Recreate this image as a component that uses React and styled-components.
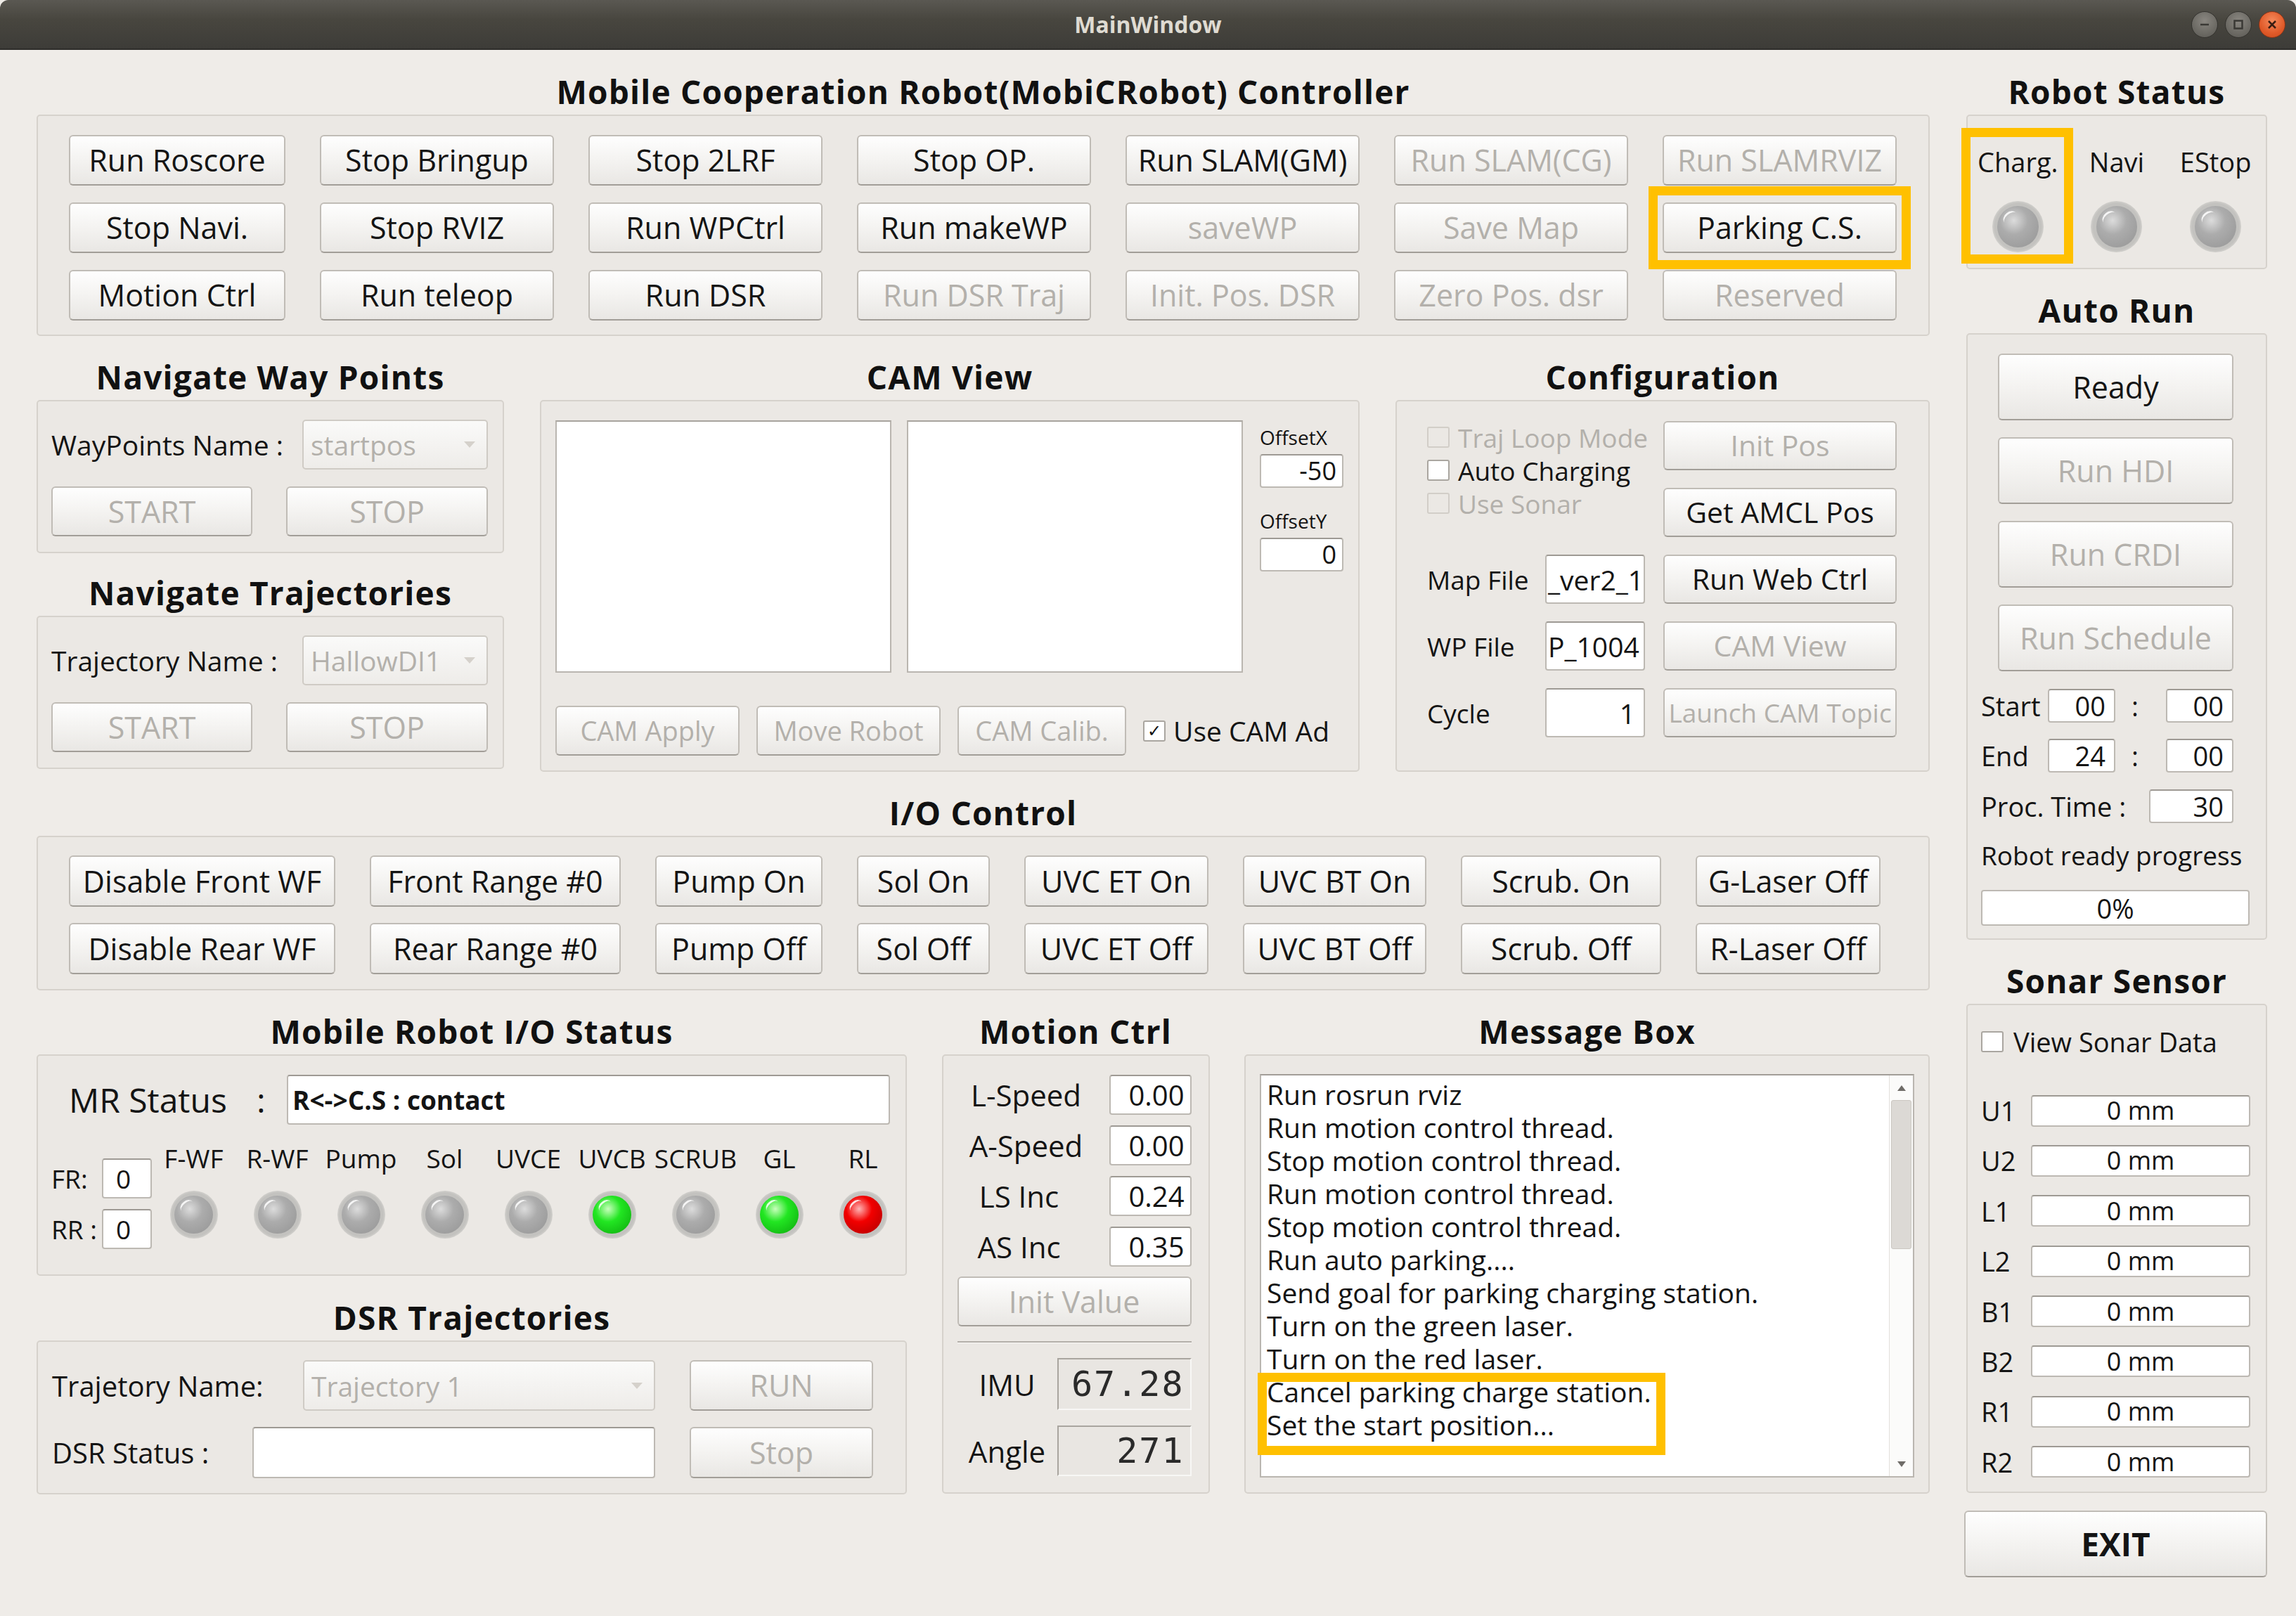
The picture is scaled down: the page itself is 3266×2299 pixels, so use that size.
import React from "react";
import styled, { createGlobalStyle } from "styled-components";

const FONT = `"Open Sans", "Noto Sans", "DejaVu Sans", sans-serif`;
const DIS = "#b3b0ab";
const INK = "#141414";

const GlobalStyle = createGlobalStyle`
  html, body { margin: 0; padding: 0; background: #efece8; }
  body { font-family: ${FONT}; }
  *, *::before, *::after { box-sizing: border-box; }
`;

const Window = styled.div`
  width: 3266px;
  height: 2299px;
  display: flex;
  flex-direction: column;
  background: #efece8;
  color: ${INK};
  overflow: hidden;
  font-family: ${FONT};
`;

const TitleBar = styled.header`
  flex: none;
  height: 71px;
  display: grid;
  grid-template-columns: 1fr auto 1fr;
  align-items: center;
  padding: 0 15px;
  background: linear-gradient(#5a5852, #48463f 40%, #3d3c38);
  border-radius: 12px 12px 0 0;
  border-bottom: 2px solid #2e2d2a;
`;
const WindowTitle = styled.div`
  grid-column: 2;
  font-size: 32px;
  font-weight: 700;
  color: #dfdbd2;
`;
const WinControls = styled.div`
  grid-column: 3;
  justify-self: end;
  display: flex;
  gap: 10px;
`;
const WinButton = styled.div`
  width: 38px;
  height: 38px;
  border-radius: 50%;
  display: flex;
  align-items: center;
  justify-content: center;
  border: 1px solid ${(p) => (p.$close ? "#8a3417" : "#34332f")};
  background: ${(p) =>
    p.$close
      ? "radial-gradient(circle at 50% 35%, #f58a5c, #e05a29 60%, #c94a1c)"
      : "radial-gradient(circle at 50% 35%, #8a8781, #6c6a64 60%, #5a5853)"};
`;

const Body = styled.main`
  flex: 1;
  display: flex;
  gap: 52px;
  padding: 29px 41px 0 52px;
`;
const Column = styled.div`
  width: ${(p) => p.$w}px;
  display: flex;
  flex-direction: column;
  gap: ${(p) => p.$gap}px;
`;
const Section = styled.section`
  display: flex;
  flex-direction: column;
`;
const SectionTitle = styled.h2`
  margin: 0 0 3px;
  height: 60px;
  line-height: 60px;
  text-align: center;
  font-size: 46px;
  letter-spacing: 1.2px;
  font-weight: 700;
  color: #111;
  white-space: nowrap;
`;
const Box = styled.div`
  height: ${(p) => p.$h}px;
  padding: ${(p) => p.$pad};
  background: #ebe8e4;
  border: 2px solid #d6d2cc;
  border-radius: 5px;
`;

const PushButton = styled.button.attrs({ type: "button" })`
  display: flex;
  align-items: center;
  justify-content: center;
  flex: none;
  width: ${(p) => (p.$w ? `${p.$w}px` : "100%")};
  height: ${(p) => p.$h || 72}px;
  margin: 0;
  padding: 0;
  font-family: ${FONT};
  font-size: ${(p) => p.$fs || 43}px;
  font-weight: ${(p) => (p.$bold ? 700 : 400)};
  line-height: 1.2;
  color: ${(p) => (p.$off ? DIS : INK)};
  white-space: nowrap;
  background: linear-gradient(#fefefe, #f5f4f2 45%, #e9e7e4);
  border: 2px solid #c0bcb6;
  border-bottom-color: #a29e98;
  border-radius: 6px;
  box-shadow: inset 0 1px 0 #fff;
`;

const LineEdit = styled.div`
  display: flex;
  align-items: center;
  justify-content: ${(p) =>
    p.$align === "right" ? "flex-end" : p.$align === "center" ? "center" : "flex-start"};
  flex: none;
  width: ${(p) => (p.$w ? `${p.$w}px` : "100%")};
  height: ${(p) => p.$h}px;
  padding: 0 ${(p) => p.$px ?? 10}px;
  background: #fff;
  border: 2px solid #bdb9b3;
  border-top-color: #9e9a94;
  border-radius: 4px;
  font-size: ${(p) => p.$fs || 38}px;
  font-weight: ${(p) => (p.$bold ? 700 : 400)};
  line-height: 1;
  white-space: nowrap;
`;

const Combo = styled.div`
  display: flex;
  align-items: center;
  flex: none;
  width: ${(p) => p.$w}px;
  height: ${(p) => p.$h}px;
  padding: 0 16px 0 10px;
  background: linear-gradient(#fafaf9, #eeece9);
  border: 2px solid #cfcbc5;
  border-radius: 5px;
  color: ${DIS};
  font-size: 39px;
  white-space: nowrap;
`;
const ComboArrow = styled.span`
  margin-left: auto;
  width: 0;
  height: 0;
  border-left: 8px solid transparent;
  border-right: 8px solid transparent;
  border-top: 9px solid #d5d1cb;
`;

const CheckBox = styled.span`
  flex: none;
  width: 32px;
  height: 30px;
  display: inline-flex;
  align-items: center;
  justify-content: center;
  background: ${(p) => (p.$off ? "transparent" : "#fff")};
  border: 2px solid ${(p) => (p.$off ? "#d2cec8" : "#aaa6a0")};
  border-radius: 3px;
  font-family: "DejaVu Sans", sans-serif;
  font-size: 24px;
  line-height: 1;
  color: #111;
`;
const CheckItem = styled.div`
  display: flex;
  align-items: center;
  gap: ${(p) => p.$gap || 12}px;
  height: ${(p) => p.$h || 40}px;
  font-size: ${(p) => p.$fs || 37}px;
  color: ${(p) => (p.$off ? DIS : INK)};
  white-space: nowrap;
`;

const Label = styled.span`
  font-size: ${(p) => p.$fs || 39}px;
  white-space: nowrap;
  color: ${INK};
`;

const Mark = styled.div`
  position: relative;
  display: flex;
  ${(p) => (p.$w ? `width: ${p.$w}px;` : "")}
  ${(p) => (p.$col ? "flex-direction: column;" : "")}
  &::after {
    content: "";
    position: absolute;
    top: ${(p) => p.$t}px;
    right: ${(p) => p.$r}px;
    bottom: ${(p) => p.$b}px;
    left: ${(p) => p.$l}px;
    border: 13px solid #ffc000;
    pointer-events: none;
    z-index: 2;
  }
`;

const LED_COLORS = {
  gray: ["#dcdcdc", "#acacac", "#949494"],
  green: ["#c8ffbc", "#22e622", "#0ca60c"],
  red: ["#ffb3b3", "#f20000", "#ac0000"],
};
const LedHalo = styled.div`
  flex: none;
  width: ${(p) => p.$size}px;
  height: ${(p) => p.$size}px;
  border-radius: 50%;
  display: flex;
  align-items: center;
  justify-content: center;
  background: radial-gradient(circle, #c3c2bf 0 64%, #dcdad6 76%, rgba(226, 224, 220, 0) 100%);
`;
const LedBulb = styled.div`
  position: relative;
  width: 80%;
  height: 80%;
  border-radius: 50%;
  background: radial-gradient(
    circle at 40% 35%,
    ${(p) => LED_COLORS[p.$c][0]} 0,
    ${(p) => LED_COLORS[p.$c][1]} 38%,
    ${(p) => LED_COLORS[p.$c][2]} 100%
  );
  &::after {
    content: "";
    position: absolute;
    left: 14%;
    top: 13%;
    width: 38%;
    height: 32%;
    border-radius: 50%;
    border-top: 3px solid rgba(255, 255, 255, 0.85);
    transform: rotate(-40deg);
  }
`;
const Led = ({ c = "gray", size = 68 }) => (
  <LedHalo $size={size}>
    <LedBulb $c={c} />
  </LedHalo>
);

/* ---------- top controller ---------- */
const TopGrid = styled.div`
  display: grid;
  grid-template-columns: 308px repeat(6, 333px);
  grid-auto-rows: 72px;
  column-gap: 49px;
  row-gap: 24px;
`;

/* ---------- middle row ---------- */
const MidRow = styled.div`
  display: grid;
  grid-template-columns: 665px 1166px 760px;
  column-gap: 51px;
`;
const NavStack = styled.div`
  display: flex;
  flex-direction: column;
  gap: ${(p) => p.$gap || 26}px;
`;
const NavNameRow = styled.div`
  display: flex;
  align-items: center;
  justify-content: space-between;
  height: 71px;
`;
const NavBtnRow = styled.div`
  display: grid;
  grid-template-columns: 286px 287px;
  column-gap: 48px;
  margin-top: 24px;
`;

const CamTop = styled.div`
  display: flex;
  gap: 22px;
`;
const Screen = styled.div`
  width: 478px;
  height: 359px;
  background: #fff;
  border: 2px solid #bab6b0;
  border-top-color: #a8a49e;
`;
const OffsetCol = styled.div`
  display: flex;
  flex-direction: column;
  margin-left: 2px;
  width: 119px;
`;
const OffsetLabel = styled.div`
  height: 48px;
  line-height: 48px;
  margin-top: ${(p) => p.$mt || 0}px;
  font-size: 28px;
  color: ${INK};
`;
const CamBottom = styled.div`
  display: flex;
  align-items: center;
  gap: 24px;
  margin-top: 47px;
`;

const ConfigGrid = styled.div`
  display: grid;
  grid-template-columns: 168px 142px 1fr;
  grid-template-rows: repeat(5, 70px);
  row-gap: 25px;
  align-items: center;
`;
const ConfigChecks = styled.div`
  grid-row: 1 / 3;
  grid-column: 1 / 3;
  align-self: start;
  margin-top: 3px;
  display: flex;
  flex-direction: column;
  gap: 7px;
`;
const ConfigButton = styled.div`
  grid-column: 3;
  grid-row: ${(p) => p.$row || "auto"};
  justify-self: end;
  height: 70px;
  display: flex;
`;

/* ---------- io control ---------- */
const IoGrid = styled.div`
  display: grid;
  grid-template-columns: 379px 357px 238px 189px 262px 261px 285px 263px;
  grid-auto-rows: 73px;
  column-gap: 49px;
  row-gap: 23px;
`;

/* ---------- bottom row ---------- */
const BottomRow = styled.div`
  display: grid;
  grid-template-columns: 1238px 381px 975px;
  column-gap: 49.5px;
`;
const MrRow = styled.div`
  display: flex;
  align-items: center;
  height: 71px;
`;
const MrLabel = styled.span`
  width: 267px;
  margin-left: 25px;
  font-size: 48px;
  white-space: nowrap;
`;
const MrColon = styled.span`
  width: 43px;
  font-size: 48px;
`;
const StatusRow = styled.div`
  display: flex;
  align-items: flex-start;
`;
const RangeCol = styled.div`
  margin-top: 48px;
  display: grid;
  grid-template-columns: 72px 71px;
  grid-template-rows: 57px 57px;
  row-gap: 15px;
  align-items: center;
`;
const LedGrid = styled.div`
  margin-top: 28px;
  display: grid;
  grid-template-columns: repeat(9, 119px);
`;
const LedCell = styled.div`
  display: flex;
  flex-direction: column;
  align-items: center;
  gap: 26px;
`;
const LedLabel = styled.div`
  height: 40px;
  line-height: 40px;
  font-size: ${(p) => p.$fs || 37}px;
  white-space: nowrap;
`;

const DsrRow = styled.div`
  display: grid;
  grid-template-columns: 1fr ${(p) => p.$field}px 261px;
  column-gap: 49px;
  align-items: center;
  height: 72px;
  margin-top: ${(p) => p.$mt || 0}px;
`;

const MotionGrid = styled.div`
  display: grid;
  grid-template-columns: 1fr 117px;
  grid-auto-rows: 57px;
  row-gap: 15px;
  align-items: center;
`;
const CenterLabel = styled.span`
  justify-self: center;
  padding-right: ${(p) => p.$pr || 0}px;
  font-size: 42px;
  white-space: nowrap;
`;
const InitWrap = styled.div`
  margin-top: 14px;
  display: flex;
`;
const Separator = styled.div`
  margin-top: 21px;
  height: 3px;
  border-top: 2px solid #b3afa9;
  border-bottom: 1px solid #fbfaf9;
`;
const LcdGrid = styled.div`
  margin-top: 21px;
  display: grid;
  grid-template-columns: 1fr 191px;
  grid-template-rows: 74px 72px;
  row-gap: 22px;
  align-items: center;
`;
const Lcd = styled.div`
  height: 100%;
  display: flex;
  align-items: center;
  justify-content: flex-end;
  padding-right: 8px;
  background: #e9e6e2;
  border: 2px solid #a9a59f;
  border-right-color: #f8f7f5;
  border-bottom-color: #f8f7f5;
  font-family: "DejaVu Sans Mono", "Liberation Mono", monospace;
  font-size: 50px;
  letter-spacing: 2px;
  color: #2a2a2a;
  line-height: 1;
`;

const TextArea = styled.div`
  height: 100%;
  display: flex;
  background: #fff;
  border: 2px solid #bab6b0;
  border-top-color: #a29e98;
`;
const MsgLines = styled.div`
  flex: 1;
  padding: 3px 0 0 8px;
`;
const MsgLine = styled.div`
  height: 47px;
  line-height: 47px;
  font-size: 39px;
  white-space: nowrap;
`;
const ScrollBar = styled.div`
  width: 34px;
  display: flex;
  flex-direction: column;
  border-left: 1px solid #e3e0dc;
  background: #fbfbfa;
`;
const ScrollArrow = styled.div`
  height: 35px;
  display: flex;
  align-items: center;
  justify-content: center;
  margin-top: ${(p) => (p.$down ? "auto" : "0")};
`;
const ScrollThumb = styled.div`
  height: 212px;
  margin: 0 2px;
  background: #dcd9d5;
  border: 1px solid #cbc7c1;
  border-radius: 3px;
`;

/* ---------- right column ---------- */
const StatusGrid = styled.div`
  display: grid;
  grid-template-columns: repeat(3, 1fr);
`;
const StatusCell = styled.div`
  display: flex;
  flex-direction: column;
  align-items: center;
  gap: 36px;
`;
const AutoStack = styled.div`
  margin-left: 24px;
  width: 335px;
  display: flex;
  flex-direction: column;
  gap: 24px;
`;
const TimeRow = styled.div`
  display: grid;
  grid-template-columns: ${(p) => p.$cols};
  align-items: center;
  height: 48px;
  margin-top: ${(p) => p.$mt}px;
`;
const Colon = styled.span`
  font-size: 38px;
  justify-self: center;
  padding-right: 16px;
`;
const ProgressText = styled.div`
  margin-top: 28px;
  height: 40px;
  line-height: 40px;
  font-size: 37px;
  white-space: nowrap;
`;
const Progress = styled.div`
  margin-top: 29px;
  width: 382px;
  height: 51px;
  display: flex;
  align-items: center;
  justify-content: center;
  background: #fff;
  border: 2px solid #bdb9b3;
  border-radius: 4px;
  font-size: 38px;
  line-height: 1;
`;
const SonarList = styled.div`
  margin-top: 52px;
  display: flex;
  flex-direction: column;
  gap: 26.4px;
`;
const SonarRow = styled.div`
  display: grid;
  grid-template-columns: 71px 312px;
  align-items: center;
  height: 45px;
`;
const ExitButton = styled(PushButton)`
  margin-top: -3px;
  margin-left: -3px;
  width: 431px;
`;

/* ---------- data ---------- */
const TOP = [
  ["Run Roscore"], ["Stop Bringup"], ["Stop 2LRF"], ["Stop OP."], ["Run SLAM(GM)"], ["Run SLAM(CG)", 1], ["Run SLAMRVIZ", 1],
  ["Stop Navi."], ["Stop RVIZ"], ["Run WPCtrl"], ["Run makeWP"], ["saveWP", 1], ["Save Map", 1], ["Parking C.S.", 0, 1],
  ["Motion Ctrl"], ["Run teleop"], ["Run DSR"], ["Run DSR Traj", 1], ["Init. Pos. DSR", 1], ["Zero Pos. dsr", 1], ["Reserved", 1],
];
const IO = [
  "Disable Front WF", "Front Range #0", "Pump On", "Sol On", "UVC ET On", "UVC BT On", "Scrub. On", "G-Laser Off",
  "Disable Rear WF", "Rear Range #0", "Pump Off", "Sol Off", "UVC ET Off", "UVC BT Off", "Scrub. Off", "R-Laser Off",
];
const LEDS = [
  ["F-WF", "gray"], ["R-WF", "gray"], ["Pump", "gray"], ["Sol", "gray"], ["UVCE", "gray"],
  ["UVCB", "green"], ["SCRUB", "gray"], ["GL", "green"], ["RL", "red"],
];
const MESSAGES = [
  "Run rosrun rviz",
  "Run motion control thread.",
  "Stop motion control thread.",
  "Run motion control thread.",
  "Stop motion control thread.",
  "Run auto parking....",
  "Send goal for parking charging station.",
  "Turn on the green laser.",
  "Turn on the red laser.",
];
const SONAR = ["U1", "U2", "L1", "L2", "B1", "B2", "R1", "R2"];

const MinIcon = () => (
  <svg width="20" height="20" viewBox="0 0 20 20">
    <line x1="4" y1="10" x2="16" y2="10" stroke="#3a3935" strokeWidth="2.5" />
  </svg>
);
const MaxIcon = () => (
  <svg width="20" height="20" viewBox="0 0 20 20">
    <rect x="4.5" y="4.5" width="11" height="11" fill="none" stroke="#3a3935" strokeWidth="2.5" />
  </svg>
);
const CloseIcon = () => (
  <svg width="20" height="20" viewBox="0 0 20 20">
    <path d="M5 5 L15 15 M15 5 L5 15" stroke="#3b1d12" strokeWidth="2.5" />
  </svg>
);
const Tri = ({ down }) => (
  <svg width="14" height="10" viewBox="0 0 14 10">
    <path d={down ? "M1 1 L13 1 L7 9 Z" : "M1 9 L13 9 L7 1 Z"} fill="#6f6c68" />
  </svg>
);

export default function App() {
  return (
    <>
      <GlobalStyle />
      <Window>
        <TitleBar>
          <WindowTitle>MainWindow</WindowTitle>
          <WinControls>
            <WinButton><MinIcon /></WinButton>
            <WinButton><MaxIcon /></WinButton>
            <WinButton $close><CloseIcon /></WinButton>
          </WinControls>
        </TitleBar>

        <Body>
          <Column $w={2693} $gap={28}>
            <Section>
              <SectionTitle>Mobile Cooperation Robot(MobiCRobot) Controller</SectionTitle>
              <Box $h={315} $pad="27px 45px 0 44px">
                <TopGrid>
                  {TOP.map(([t, off, mark], i) =>
                    mark ? (
                      <Mark key={i} $t={-23} $r={-20} $b={-23} $l={-20}>
                        <PushButton>{t}</PushButton>
                      </Mark>
                    ) : (
                      <PushButton key={i} $off={!!off}>{t}</PushButton>
                    )
                  )}
                </TopGrid>
              </Box>
            </Section>

            <MidRow>
              <NavStack>
                <Section>
                  <SectionTitle>Navigate Way Points</SectionTitle>
                  <Box $h={218} $pad="26px 21px 0 19px">
                    <NavNameRow>
                      <Label>WayPoints Name :</Label>
                      <Combo $w={264} $h={71}>startpos<ComboArrow /></Combo>
                    </NavNameRow>
                    <NavBtnRow>
                      <PushButton $h={71} $off>START</PushButton>
                      <PushButton $h={71} $off>STOP</PushButton>
                    </NavBtnRow>
                  </Box>
                </Section>
                <Section>
                  <SectionTitle>Navigate Trajectories</SectionTitle>
                  <Box $h={218} $pad="26px 21px 0 19px">
                    <NavNameRow>
                      <Label>Trajectory Name :</Label>
                      <Combo $w={264} $h={71}>HallowDI1<ComboArrow /></Combo>
                    </NavNameRow>
                    <NavBtnRow>
                      <PushButton $h={71} $off>START</PushButton>
                      <PushButton $h={71} $off>STOP</PushButton>
                    </NavBtnRow>
                  </Box>
                </Section>
              </NavStack>

              <Section>
                <SectionTitle>CAM View</SectionTitle>
                <Box $h={529} $pad="27px 20px 0 20px">
                  <CamTop>
                    <Screen />
                    <Screen />
                    <OffsetCol>
                      <OffsetLabel>OffsetX</OffsetLabel>
                      <LineEdit $h={48} $align="right" $fs={36} $px={8}>-50</LineEdit>
                      <OffsetLabel $mt={23}>OffsetY</OffsetLabel>
                      <LineEdit $h={48} $align="right" $fs={36} $px={8}>0</LineEdit>
                    </OffsetCol>
                  </CamTop>
                  <CamBottom>
                    <PushButton $w={262} $h={71} $off $fs={38}>CAM Apply</PushButton>
                    <PushButton $w={262} $h={71} $off $fs={38}>Move Robot</PushButton>
                    <PushButton $w={240} $h={71} $off $fs={38}>CAM Calib.</PushButton>
                    <CheckItem $fs={39} $gap={11}>
                      <CheckBox>✓</CheckBox>
                      Use CAM Ad
                    </CheckItem>
                  </CamBottom>
                </Box>
              </Section>

              <Section>
                <SectionTitle>Configuration</SectionTitle>
                <Box $h={529} $pad="28px 45px 0 43px">
                  <ConfigGrid>
                    <ConfigChecks>
                      <CheckItem $off><CheckBox $off />Traj Loop Mode</CheckItem>
                      <CheckItem><CheckBox />Auto Charging</CheckItem>
                      <CheckItem $off><CheckBox $off />Use Sonar</CheckItem>
                    </ConfigChecks>
                    <ConfigButton $row={1}>
                      <PushButton $w={332} $h={70} $off $fs={41}>Init Pos</PushButton>
                    </ConfigButton>
                    <ConfigButton $row={2}>
                      <PushButton $w={332} $h={70} $fs={41}>Get AMCL Pos</PushButton>
                    </ConfigButton>

                    <Label $fs={37}>Map File</Label>
                    <LineEdit $h={70} $px={2} $fs={39}>_ver2_1</LineEdit>
                    <ConfigButton>
                      <PushButton $w={332} $h={70} $fs={41}>Run Web Ctrl</PushButton>
                    </ConfigButton>

                    <Label $fs={37}>WP File</Label>
                    <LineEdit $h={70} $px={2} $fs={39}>P_1004</LineEdit>
                    <ConfigButton>
                      <PushButton $w={332} $h={70} $off $fs={41}>CAM View</PushButton>
                    </ConfigButton>

                    <Label $fs={37}>Cycle</Label>
                    <LineEdit $h={70} $align="right" $px={12} $fs={39}>1</LineEdit>
                    <ConfigButton>
                      <PushButton $w={332} $h={70} $off $fs={37}>Launch CAM Topic</PushButton>
                    </ConfigButton>
                  </ConfigGrid>
                </Box>
              </Section>
            </MidRow>

            <Section>
              <SectionTitle>I/O Control</SectionTitle>
              <Box $h={220} $pad="26px 44px 0 44px">
                <IoGrid>
                  {IO.map((t, i) => (
                    <PushButton key={i} $h={73}>{t}</PushButton>
                  ))}
                </IoGrid>
              </Box>
            </Section>

            <BottomRow>
              <NavStack $gap={29}>
                <Section>
                  <SectionTitle>Mobile Robot I/O Status</SectionTitle>
                  <Box $h={315} $pad="27px 22px 0 19px">
                    <MrRow>
                      <MrLabel>MR Status</MrLabel>
                      <MrColon>:</MrColon>
                      <LineEdit $w={858} $h={71} $bold $fs={37} $px={6}>R&lt;-&gt;C.S : contact</LineEdit>
                    </MrRow>
                    <StatusRow>
                      <RangeCol>
                        <Label $fs={37}>FR:</Label>
                        <LineEdit $h={57} $fs={37} $px={18}>0</LineEdit>
                        <Label $fs={37}>RR :</Label>
                        <LineEdit $h={57} $fs={37} $px={18}>0</LineEdit>
                      </RangeCol>
                      <LedGrid>
                        {LEDS.map(([name, c]) => (
                          <LedCell key={name}>
                            <LedLabel>{name}</LedLabel>
                            <Led c={c} />
                          </LedCell>
                        ))}
                      </LedGrid>
                    </StatusRow>
                  </Box>
                </Section>
                <Section>
                  <SectionTitle>DSR Trajectories</SectionTitle>
                  <Box $h={219} $pad="26px 46px 0 20px">
                    <DsrRow $field={501}>
                      <Label $fs={40}>Trajetory Name:</Label>
                      <Combo $w={501} $h={72}>Trajectory 1<ComboArrow /></Combo>
                      <PushButton $h={72} $off>RUN</PushButton>
                    </DsrRow>
                    <DsrRow $field={573} $mt={23}>
                      <Label $fs={40}>DSR Status :</Label>
                      <LineEdit $h={73} />
                      <PushButton $h={73} $off>Stop</PushButton>
                    </DsrRow>
                  </Box>
                </Section>
              </NavStack>

              <Section>
                <SectionTitle>Motion Ctrl</SectionTitle>
                <Box $h={625} $pad="27px 24px 0 20px">
                  <MotionGrid>
                    <CenterLabel $pr={20}>L-Speed</CenterLabel>
                    <LineEdit $h={57} $align="right" $fs={40} $px={8}>0.00</LineEdit>
                    <CenterLabel $pr={20}>A-Speed</CenterLabel>
                    <LineEdit $h={57} $align="right" $fs={40} $px={8}>0.00</LineEdit>
                    <CenterLabel $pr={40}>LS Inc</CenterLabel>
                    <LineEdit $h={57} $align="right" $fs={40} $px={8}>0.24</LineEdit>
                    <CenterLabel $pr={40}>AS Inc</CenterLabel>
                    <LineEdit $h={57} $align="right" $fs={40} $px={8}>0.35</LineEdit>
                  </MotionGrid>
                  <InitWrap>
                    <PushButton $h={71} $off>Init Value</PushButton>
                  </InitWrap>
                  <Separator />
                  <LcdGrid>
                    <CenterLabel>IMU</CenterLabel>
                    <Lcd>67.28</Lcd>
                    <CenterLabel>Angle</CenterLabel>
                    <Lcd>271</Lcd>
                  </LcdGrid>
                </Box>
              </Section>

              <Section>
                <SectionTitle>Message Box</SectionTitle>
                <Box $h={625} $pad="26px 20px 21px 20px">
                  <TextArea>
                    <MsgLines>
                      {MESSAGES.map((m, i) => (
                        <MsgLine key={i}>{m}</MsgLine>
                      ))}
                      <Mark $col $w={554} $t={-3} $r={-13} $b={-20} $l={-13}>
                        <MsgLine>Cancel parking charge station.</MsgLine>
                        <MsgLine>Set the start position...</MsgLine>
                      </Mark>
                    </MsgLines>
                    <ScrollBar>
                      <ScrollArrow><Tri /></ScrollArrow>
                      <ScrollThumb />
                      <ScrollArrow $down><Tri down /></ScrollArrow>
                    </ScrollBar>
                  </TextArea>
                </Box>
              </Section>
            </BottomRow>
          </Column>

          <Column $w={428} $gap={28}>
            <Section>
              <SectionTitle>Robot Status</SectionTitle>
              <Box $h={220} $pad="45px 1px 0 1px">
                <StatusGrid>
                  <Mark $col $t={-28} $r={-8} $b={-16} $l={-10}>
                    <StatusCell>
                      <LedLabel $fs={38}>Charg.</LedLabel>
                      <Led size={73} />
                    </StatusCell>
                  </Mark>
                  <StatusCell>
                    <LedLabel $fs={38}>Navi</LedLabel>
                    <Led size={73} />
                  </StatusCell>
                  <StatusCell>
                    <LedLabel $fs={38}>EStop</LedLabel>
                    <Led size={73} />
                  </StatusCell>
                </StatusGrid>
              </Box>
            </Section>

            <Section>
              <SectionTitle>Auto Run</SectionTitle>
              <Box $h={863} $pad="27px 22px 0 19px">
                <AutoStack>
                  <PushButton $h={95}>Ready</PushButton>
                  <PushButton $h={95} $off>Run HDI</PushButton>
                  <PushButton $h={95} $off>Run CRDI</PushButton>
                  <PushButton $h={95} $off>Run Schedule</PushButton>
                </AutoStack>
                <TimeRow $cols="95px 96px 72px 96px" $mt={23}>
                  <Label $fs={38}>Start</Label>
                  <LineEdit $h={48} $align="right" $px={12}>00</LineEdit>
                  <Colon>:</Colon>
                  <LineEdit $h={48} $align="right" $px={12}>00</LineEdit>
                </TimeRow>
                <TimeRow $cols="95px 96px 72px 96px" $mt={23}>
                  <Label $fs={38}>End</Label>
                  <LineEdit $h={48} $align="right" $px={12}>24</LineEdit>
                  <Colon>:</Colon>
                  <LineEdit $h={48} $align="right" $px={12}>00</LineEdit>
                </TimeRow>
                <TimeRow $cols="239px 120px" $mt={24}>
                  <Label $fs={38}>Proc. Time :</Label>
                  <LineEdit $h={48} $align="right" $px={12}>30</LineEdit>
                </TimeRow>
                <ProgressText>Robot ready progress</ProgressText>
                <Progress>0%</Progress>
              </Box>
            </Section>

            <Section>
              <SectionTitle>Sonar Sensor</SectionTitle>
              <Box $h={696} $pad="32px 22px 0 19px">
                <CheckItem $fs={38} $gap={14}>
                  <CheckBox />
                  View Sonar Data
                </CheckItem>
                <SonarList>
                  {SONAR.map((s) => (
                    <SonarRow key={s}>
                      <Label $fs={38}>{s}</Label>
                      <LineEdit $h={45} $align="center" $fs={36}>0 mm</LineEdit>
                    </SonarRow>
                  ))}
                </SonarList>
              </Box>
            </Section>

            <ExitButton $h={95} $bold $fs={46}>EXIT</ExitButton>
          </Column>
        </Body>
      </Window>
    </>
  );
}
